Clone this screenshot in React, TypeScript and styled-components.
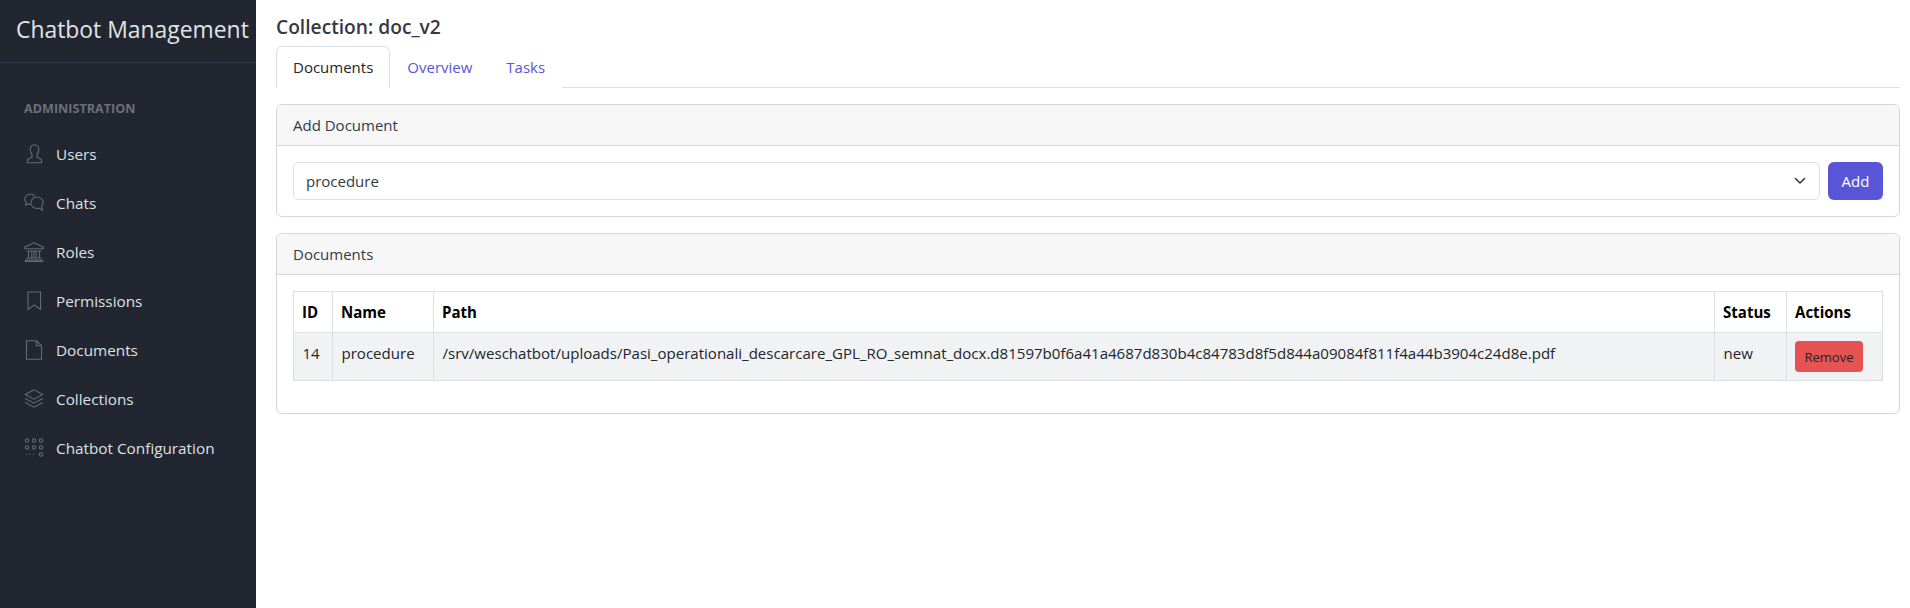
import React from 'react'
import styled, { createGlobalStyle } from 'styled-components'

const FONT = `"Open Sans", "Noto Sans", "Liberation Sans", sans-serif`

const GlobalStyle = createGlobalStyle`
  html, body {
    margin: 0;
    padding: 0;
    background: #ffffff;
    font-family: ${FONT};
  }
  * {
    box-sizing: border-box;
  }
`

const UserIcon = () => (
  <NavSvg viewBox="0 0 20 20">
    <path d="M10.5.8C7.9.8 6.2 2.8 6.2 5.8c0 2 .8 3.7 1.8 4.7v2.6l-4.500 2.400v3.300h14v-3.300L13 13.100v-2.600c1-1 1.800-2.700 1.800-4.700 0-3-1.700-5-4.300-5z" />
  </NavSvg>
)

const ChatIcon = () => (
  <NavSvg viewBox="0 0 20 20">
    <path d="M7 11.500c-1.200 0-2-.2-2.700-.5L1.500 12l.9-2.700C1.200 8.300.6 7 .8 5.600 1.200 3 3.600 1.200 6.500 1.200c1.800 0 3.400.8 4.400 2" />
    <path d="M13 4c3.500 0 6.200 2.400 6.200 5.500 0 1.500-.6 2.800-1.700 3.800l1 3.900-3.400-2c-.7.2-1.400.3-2.100.3-3.500 0-6.200-2.400-6.200-5.500C6.800 6.400 9.500 4 13 4z" />
  </NavSvg>
)

const BankIcon = () => (
  <NavSvg viewBox="0 0 20 20">
    <path d="M10 .8.8 5.200v1.600h18.400V5.200zM2.500 9h15M2.500 16h15M.8 18h18.400M.8 19.400h18.400" />
    <path d="M4.500 9v7M7.800 9v7M10 9v7M12.200 9v7M15.500 9v7" />
  </NavSvg>
)

const BookmarkIcon = () => (
  <NavSvg viewBox="0 0 20 20">
    <path d="M4 1h12.500v17.500l-6.250-4.500L4 18.500z" />
  </NavSvg>
)

const FileIcon = () => (
  <NavSvg viewBox="0 0 20 20">
    <path d="M2.500.8h10l5 5v13.500h-15zM12.500.8v5h5" />
  </NavSvg>
)

const LayersIcon = () => (
  <NavSvg viewBox="0 0 20 20">
    <path d="M10 .8 1.200 5.500l8.800 4.700 8.800-4.700zM1.200 9.500l8.800 4.700 8.800-4.700M1.200 13.500l8.800 4.700 8.800-4.700" />
  </NavSvg>
)

const AppsIcon = () => (
  <NavSvg viewBox="0 0 20 20">
    <circle cx="3" cy="2.500" r="1.700" />
    <circle cx="10" cy="2.500" r="1.700" />
    <circle cx="17" cy="2.500" r="1.700" />
    <circle cx="3" cy="9.500" r="1.700" />
    <circle cx="10" cy="9.500" r="1.700" />
    <circle cx="17" cy="9.500" r="1.700" />
    <circle cx="17" cy="16.500" r="1.700" />
    <path d="M2 16.500h10" strokeDasharray="1 2.500" />
  </NavSvg>
)

const navItems = [
  { label: 'Users', icon: <UserIcon /> },
  { label: 'Chats', icon: <ChatIcon /> },
  { label: 'Roles', icon: <BankIcon /> },
  { label: 'Permissions', icon: <BookmarkIcon /> },
  { label: 'Documents', icon: <FileIcon /> },
  { label: 'Collections', icon: <LayersIcon /> },
  { label: 'Chatbot Configuration', icon: <AppsIcon /> },
]

const App: React.FC = () => {
  return (
    <Page>
      <GlobalStyle />
      <Sidebar>
        <Brand>Chatbot Management</Brand>
        <Nav>
          <NavTitle>ADMINISTRATION</NavTitle>
          {navItems.map(item => (
            <NavItem key={item.label}>
              {item.icon}
              {item.label}
            </NavItem>
          ))}
        </Nav>
      </Sidebar>
      <Main>
        <Title>Collection: doc_v2</Title>
        <Tabs>
          <Tab $active>Documents</Tab>
          <Tab>Overview</Tab>
          <Tab>Tasks</Tab>
        </Tabs>
        <Card>
          <CardHeader>Add Document</CardHeader>
          <AddBody>
            <SelectBox>
              procedure
              <svg width="12" height="12" viewBox="0 0 12 12" fill="none">
                <path d="m1.500 3.500 4.500 4.500 4.500-4.500" stroke="#333a46" strokeWidth="1.600" strokeLinecap="round" strokeLinejoin="round" />
              </svg>
            </SelectBox>
            <AddButton>Add</AddButton>
          </AddBody>
        </Card>
        <Card>
          <CardHeader>Documents</CardHeader>
          <TableBody>
            <Table>
              <colgroup>
                <col width="39" />
                <col width="101" />
                <col />
                <col width="72" />
                <col width="96" />
              </colgroup>
              <thead>
                <tr>
                  <HeadCell>ID</HeadCell>
                  <HeadCell>Name</HeadCell>
                  <HeadCell>Path</HeadCell>
                  <HeadCell>Status</HeadCell>
                  <HeadCell>Actions</HeadCell>
                </tr>
              </thead>
              <tbody>
                <tr>
                  <Cell>14</Cell>
                  <Cell>procedure</Cell>
                  <Cell>/srv/weschatbot/uploads/Pasi_operationali_descarcare_GPL_RO_semnat_docx.d81597b0f6a41a4687d830b4c84783d8f5d844a09084f811f4a44b3904c24d8e.pdf</Cell>
                  <Cell>new</Cell>
                  <ActionCell>
                    <RemoveButton>Remove</RemoveButton>
                  </ActionCell>
                </tr>
              </tbody>
            </Table>
          </TableBody>
        </Card>
      </Main>
    </Page>
  )
}

const Page = styled.div`
  display: flex;
  height: 608px;
  overflow: hidden;
`

const Sidebar = styled.aside`
  width: 256px;
  flex-shrink: 0;
  background: #212631;
`

const Brand = styled.div`
  height: 63px;
  padding: 14px 0 0 16px;
  border-bottom: 1px solid #323a49;
  color: #e2e3e5;
  font-size: 22.9px;
  line-height: 32px;
  white-space: nowrap;
`

const Nav = styled.nav`
  padding-top: 33px;
`

const NavTitle = styled.div`
  height: 33px;
  padding-left: 24px;
  color: #6b6f78;
  font-size: 12.6px;
  font-weight: 700;
  line-height: 25px;
`

const NavItem = styled.div`
  display: flex;
  align-items: center;
  gap: 12px;
  height: 49px;
  padding-left: 24px;
  color: #dfe1e4;
  font-size: 15.3px;
`

const NavSvg = styled.svg`
  width: 20px;
  height: 20px;
  flex-shrink: 0;
  fill: none;
  stroke: #656973;
  stroke-width: 1.1;
`

const Main = styled.main`
  flex: 1;
  min-width: 0;
  padding: 14px 10px 0 20px;
`

const Title = styled.h1`
  margin: 0;
  height: 32px;
  color: #333a46;
  font-size: 19.2px;
  font-weight: 600;
  line-height: 26px;
`

const Tabs = styled.div`
  display: flex;
  height: 42px;
  margin-bottom: 16px;
  border-bottom: 1px solid #dbdfe6;
`

const Tab = styled.div<{ $active?: boolean }>`
  height: 42px;
  padding: 0 16px;
  color: ${props => (props.$active ? '#21252b' : '#5856d6')};
  background: #ffffff;
  border: 1px solid ${props => (props.$active ? '#dbdfe6' : 'transparent')};
  border-bottom-color: ${props => (props.$active ? '#ffffff' : 'transparent')};
  border-radius: 6px 6px 0 0;
  font-size: 15px;
  line-height: 40px;
`

const Card = styled.section`
  margin-bottom: 16px;
  border: 1px solid #d4d6d9;
  border-radius: 6px;
  overflow: hidden;
`

const CardHeader = styled.div`
  height: 41px;
  padding: 0 16px;
  background: #f7f7f8;
  border-bottom: 1px solid #d4d6d9;
  color: #333a46;
  font-size: 15px;
  line-height: 40px;
`

const AddBody = styled.div`
  display: flex;
  gap: 8px;
  padding: 16px;
`

const SelectBox = styled.div`
  display: flex;
  flex: 1;
  align-items: center;
  justify-content: space-between;
  height: 38px;
  padding: 0 13px 0 12px;
  border: 1px solid #dbdfe6;
  border-radius: 6px;
  color: #333a46;
  font-size: 15px;
`

const AddButton = styled.button`
  width: 55px;
  height: 38px;
  padding: 0;
  background: #5856d6;
  border: 0;
  border-radius: 6px;
  color: #ffffff;
  font-family: inherit;
  font-size: 15px;
`

const TableBody = styled.div`
  padding: 16px 16px 32px;
`

const Table = styled.table`
  width: 100%;
  table-layout: fixed;
  border-collapse: collapse;
  font-size: 15.05px;
`

const HeadCell = styled.th`
  height: 41px;
  padding: 0 8px;
  border: 1px solid #dbdfe6;
  color: #000000;
  font-weight: 700;
  text-align: left;
`

const Cell = styled.td`
  height: 48px;
  padding: 8px 8px 8px 8.5px;
  background: #f1f2f3;
  border: 1px solid #dbdfe6;
  color: #21252b;
  vertical-align: top;
  line-height: 24px;
  white-space: nowrap;
`

const ActionCell = styled(Cell)`
  padding: 8px;
`

const RemoveButton = styled.button`
  display: block;
  width: 68px;
  height: 31px;
  padding: 0;
  background: #e55353;
  border: 0;
  border-radius: 4px;
  color: #21252b;
  font-family: inherit;
  font-size: 13px;
`

export default App
